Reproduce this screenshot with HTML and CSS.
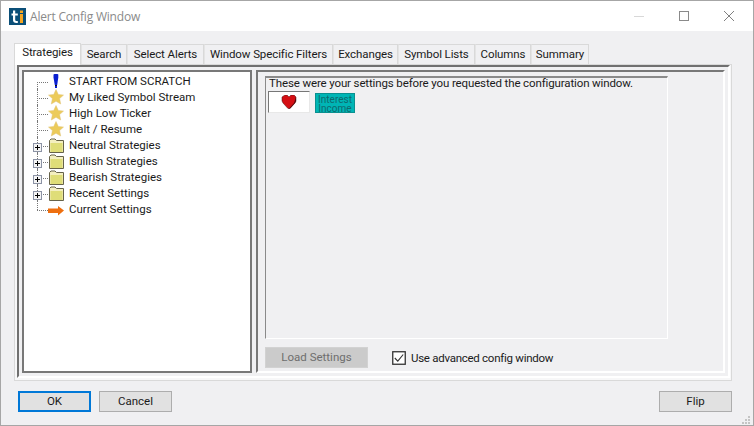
FILE: index.html
```html
<!DOCTYPE html>
<html lang="en">
<head>
<meta charset="utf-8">
<title>Alert Config Window</title>
<link rel="stylesheet" href="styles.css">
</head>
<body>
<div class="window">
  <header class="titlebar">
    <svg class="logo" width="17" height="17" viewBox="0 0 17 17"><rect width="17" height="17" fill="#0b4f78"/><path d="M4 2.500h2.200v3H8.800v2H6.200v4.300c0 1 .6 1.400 2.600 1.200V15c-3.300.3-4.800-.6-4.800-2.900V7.500H2.500v-2H4z" fill="#fff"/><rect x="11" y="2.500" width="3" height="2.500" fill="#f5a623"/><rect x="11" y="6" width="3" height="9" fill="#f5a623"/></svg>
    <span class="title">Alert Config Window</span>
    <div class="controls">
      <svg width="12" height="12" viewBox="0 0 12 12"><path d="M1 6.500h10" stroke="#d8d8d8" fill="none"/></svg>
      <svg width="12" height="12" viewBox="0 0 12 12"><rect x="1.500" y="1.500" width="9" height="9" stroke="#8a8a8a" fill="none"/></svg>
      <svg width="12" height="12" viewBox="0 0 12 12"><path d="M1 1l10 10M11 1L1 11" stroke="#808080" fill="none"/></svg>
    </div>
  </header>

  <main class="content">
    <nav class="tabs">
      <span class="tab active w1">Strategies</span>
      <span class="tab w2">Search</span>
      <span class="tab w3">Select Alerts</span>
      <span class="tab w4">Window Specific Filters</span>
      <span class="tab w5">Exchanges</span>
      <span class="tab w6">Symbol Lists</span>
      <span class="tab w7">Columns</span>
      <span class="tab w8">Summary</span>
    </nav>

    <section class="pane">
      <div class="frame">
        <div class="tree">
          <div class="row first"><span class="gutter"></span><span class="icon">
            <svg width="16" height="16" viewBox="0 0 16 16"><path d="M5.500 1.500L6.500 1h3l.8.500v3L9.200 12H6.800L5.500 4.500z" fill="#0a1fd0"/><rect x="7" y="12" width="2" height="1" fill="#111"/><rect x="7" y="13" width="2" height="2" fill="#0a1fd0"/></svg></span><span class="label">START FROM SCRATCH</span></div>
          <div class="row"><span class="gutter"></span><span class="icon">
            <svg width="16" height="16" viewBox="0 0 16 16"><use href="#star"/></svg></span><span class="label">My Liked Symbol Stream</span></div>
          <div class="row"><span class="gutter"></span><span class="icon">
            <svg width="16" height="16" viewBox="0 0 16 16"><use href="#star"/></svg></span><span class="label">High Low Ticker</span></div>
          <div class="row"><span class="gutter"></span><span class="icon">
            <svg width="16" height="16" viewBox="0 0 16 16"><use href="#star"/></svg></span><span class="label">Halt / Resume</span></div>
          <div class="row"><span class="gutter"><span class="plus"></span></span><span class="icon">
            <svg width="16" height="16" viewBox="0 0 16 16"><use href="#folder"/></svg></span><span class="label">Neutral Strategies</span></div>
          <div class="row"><span class="gutter"><span class="plus"></span></span><span class="icon">
            <svg width="16" height="16" viewBox="0 0 16 16"><use href="#folder"/></svg></span><span class="label">Bullish Strategies</span></div>
          <div class="row"><span class="gutter"><span class="plus"></span></span><span class="icon">
            <svg width="16" height="16" viewBox="0 0 16 16"><use href="#folder"/></svg></span><span class="label">Bearish Strategies</span></div>
          <div class="row"><span class="gutter"><span class="plus"></span></span><span class="icon">
            <svg width="16" height="16" viewBox="0 0 16 16"><use href="#folder"/></svg></span><span class="label">Recent Settings</span></div>
          <div class="row last"><span class="gutter"></span><span class="icon">
            <svg width="16" height="16" viewBox="0 0 16 16"><path d="M0 7.500h10V5l6 4.500-6 5V12H0z" fill="#ee6f10"/></svg></span><span class="label">Current Settings</span></div>
        </div>

        <div class="settings">
          <div class="saved">
            <p class="note">These were your settings before you requested the configuration window.</p>
            <div class="strategy">
              <div class="heartbox">
                <svg width="16" height="14" viewBox="0 0 16 14"><path d="M4 0h2l2 2 2-2h3l2 2v4l-1 2-5 5.500H7L2 8 1 6V2z" fill="#d40f14" stroke="#4a1010" stroke-width=".5"/><path d="M15 2v4l-1 2-5 5.500H8l5-5.500 1-3z" fill="#4f0a0d"/></svg>
              </div>
              <div class="chip">Interest<br>Income</div>
            </div>
          </div>
          <div class="actions">
            <button class="loadbtn" type="button" disabled>Load Settings</button>
            <label class="check">
              <svg class="box" width="14" height="14" viewBox="0 0 14 14"><rect x=".75" y=".75" width="12.500" height="12.500" fill="#fff" stroke="#333" stroke-width="1.300"/><path d="M2.800 7l3 3.200 5.400-6.700" stroke="#333" stroke-width="1.100" fill="none"/></svg>
              <span class="checktext">Use advanced config window</span>
            </label>
          </div>
        </div>
      </div>
    </section>

    <footer class="footer">
      <button class="btn primary" type="button">OK</button>
      <button class="btn" type="button">Cancel</button>
      <button class="btn flip" type="button">Flip</button>
    </footer>
    <svg class="grip" width="8" height="8" viewBox="0 0 8 8"><path d="M6 0h2v2H6zM3 3h2v2H3zM6 3h2v2H6zM0 6h2v2H0zM3 6h2v2H3zM6 6h2v2H6z" fill="#c4c4c4"/></svg>
  </main>
</div>

<svg class="defs" width="0" height="0">
  <defs>
    <symbol id="star" viewBox="0 0 16 16"><path d="M8 .500l2.300 5 5.200.6-3.900 3.500 1.100 5.400L8 12.300 3.300 15l1.100-5.400L.5 6.100l5.200-.6z" fill="#eccb5a" stroke="#dfc27a" stroke-width=".5"/></symbol>
    <symbol id="folder" viewBox="0 0 16 16"><path d="M1.500 15.500v-12l1.500-1.500h4l1.500 1.500h7v12z" fill="#f4efc0" stroke="#66624a"/><rect x="2.500" y="6" width="12" height="9" fill="#dfdd78"/></symbol>
  </defs>
</svg>
</body>
</html>
```
FILE: styles.css
```css
* { box-sizing: border-box; }
html, body { margin: 0; padding: 0; }
body { width: 754px; height: 426px; overflow: hidden; font-family: Roboto, sans-serif; font-size: 11.5px; color: #1a1a1a; }
.window { width: 754px; height: 426px; display: flex; flex-direction: column; border: 1px solid #a6a6a6; background: #f0f0f2; }
.titlebar { height: 30px; flex: none; background: #fff; display: flex; align-items: center; padding-left: 8px; }
.logo { flex: none; margin-top: 1px; }
.title { margin-left: 4px; font-size: 12px; letter-spacing: -.2px; color: #8a8a8a; font-family: "Open Sans", sans-serif; }
.controls { margin-left: auto; display: flex; gap: 33px; padding-right: 18px; align-items: center; }
.content { flex: 1; display: flex; flex-direction: column; padding: 11px 0 0 13px; position: relative; }
.tabs { display: flex; height: 22px; align-items: flex-end; position: relative; z-index: 1; letter-spacing: -.1px; }
.tab { height: 20px; line-height: 18px; text-align: center; background: #f0f0f2; border: 1px solid #d9d9d9; border-left-color: #e4e4e4; border-bottom: 0; flex: none; }
.tab.active { height: 22px; line-height: 16px; background: #fff; margin-bottom: -1px; border-color: #d9d9d9; }
.w1 { width: 67px; } .w2 { width: 46px; } .w3 { width: 77px; } .w4 { width: 129px; }
.w5 { width: 65px; } .w6 { width: 77px; } .w7 { width: 56px; } .w8 { width: 58px; }
.pane { width: 718px; height: 317px; border: 1px solid #d9d9d9; background: #f7f7f8; padding: 0 0 0 2px; }
.frame { width: 713px; height: 313px; display: flex; gap: 4px; padding: 3px; border: 2px solid; border-color: #707070 #fff #fff #707070; background: #f0f0f2; }
.tree { width: 230px; flex: none; background: #fff; border: 2px solid #787878; padding-top: 1px; }
.row { display: flex; height: 16px; align-items: center; }
.gutter { position: relative; flex: none; width: 11px; height: 16px; margin-left: 13px; }
.gutter::before { content: ""; position: absolute; left: 0; top: 0; bottom: 0; border-left: 1px dotted #777; }
.gutter::after { content: ""; position: absolute; left: 0; right: 0; top: 9px; border-top: 1px dotted #777; }
.first .gutter::before { top: 9px; }
.last .gutter::before { bottom: 7px; }
.plus { position: absolute; z-index: 1; left: -4px; top: 6px; width: 9px; height: 9px; border: 1px solid #8c93a5; background: linear-gradient(#000,#000) center/5px 1px no-repeat, linear-gradient(#000,#000) center/1px 5px no-repeat, #f4f4f4; }
.icon { flex: none; width: 16px; height: 16px; }
.icon svg { display: block; }
.label { margin-left: 5px; white-space: nowrap; }
.settings { flex: 1; display: flex; flex-direction: column; border: 2px solid; border-color: #787878 #fff #fff #787878; padding: 4px 0 0 7px; }
.saved { width: 403px; height: 263px; flex: none; border: 1px solid; border-top: 2px solid #8a8a8a; border-left: 1px solid #8a8a8a; border-right-color: #fff; border-bottom-color: #fff; padding-left: 2px; }
.note { margin: 0 0 0 1px; height: 13px; line-height: 11px; white-space: nowrap; letter-spacing: -.13px; }
.strategy { display: flex; align-items: flex-end; gap: 5px; height: 22px; }
.heartbox { width: 42px; height: 22px; background: #fff; border: 1px solid; border-color: #777 #e8e8e8 #e8e8e8 #777; display: flex; justify-content: center; align-items: center; }
.chip { width: 40px; height: 20px; background: #00b5b5; border: 1px solid #0a9090; color: #0e6a6e; font-size: 10px; line-height: 8.500px; text-align: center; padding-top: 2px; }
.actions { display: flex; align-items: center; margin-top: 8px; height: 21px; }
.loadbtn { width: 103px; height: 21px; border: 1px solid #d2d2d2; background: #cbcbcb; color: #6e6e6e; font: inherit; padding: 0 0 2px; }
.check { display: flex; align-items: center; gap: 5px; margin-left: 24px; }
.checktext { letter-spacing: -.27px; }
.box { flex: none; }
.footer { display: flex; gap: 8px; padding: 10px 0 0 4px; width: 718px; }
.btn { width: 73px; height: 21px; padding: 0 0 2px; border: 1px solid #adadad; background: #e1e1e1; color: #1a1a1a; font: inherit; }
.primary { border: 2px solid #0078d7; }
.flip { margin-left: auto; }
.grip { position: absolute; right: 3px; bottom: 1px; }
.defs { position: absolute; }
```
